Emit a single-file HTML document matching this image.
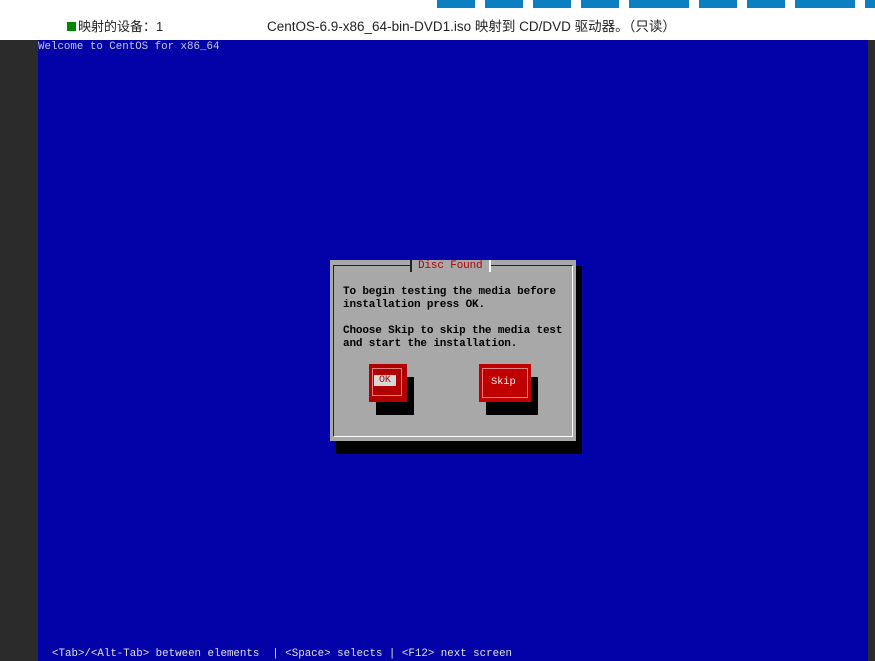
<!DOCTYPE html><html><head><style>
body{margin:0;width:875px;height:661px;overflow:hidden;background:#fff;position:relative;font-family:"Liberation Mono",monospace}
.a{position:absolute}
.t{background:#0a7fc2;top:0;height:8px}
.m{font-family:"Liberation Mono",monospace;font-size:11px;font-weight:bold;color:#000;white-space:pre;letter-spacing:-0.15px}
</style></head><body>
<div class="a t" style="left:437px;width:38px"></div><div class="a t" style="left:485px;width:38px"></div>
<div class="a t" style="left:533px;width:38px"></div><div class="a t" style="left:581px;width:38px"></div>
<div class="a t" style="left:629px;width:60px"></div><div class="a t" style="left:699px;width:38px"></div>
<div class="a t" style="left:747px;width:38px"></div><div class="a t" style="left:795px;width:60px"></div>
<div class="a t" style="left:865px;width:10px"></div>
<div class="a" style="left:67px;top:16px;font:13px 'Liberation Sans','Noto Sans CJK SC',sans-serif;color:#222"><span style="display:inline-block;width:9px;height:9px;background:#080;margin-right:2px"></span>映射的设备：1</div>
<div class="a" style="left:267px;top:15px;font:13.5px 'Liberation Sans','Noto Sans CJK SC',sans-serif;color:#222">CentOS-6.9-x86_64-bin-DVD1.iso 映射到 CD/DVD 驱动器。（只读）</div>
<div class="a" style="left:0;top:40px;width:875px;height:621px;background:#2b2b2b"></div>
<div class="a" style="left:38px;top:40px;width:830px;height:621px;background:#0202a8"></div>
<div class="a m" style="left:38px;top:41px;color:#c8c8d8;font-weight:normal;font-size:10.8px;letter-spacing:0">Welcome to CentOS for x86_64</div>
<div class="a m" style="left:52px;top:648px;color:#e0e0e0;font-weight:normal;font-size:10.8px;letter-spacing:0">&lt;Tab&gt;/&lt;Alt-Tab&gt; between elements  | &lt;Space&gt; selects | &lt;F12&gt; next screen</div>
<div class="a" style="left:336px;top:266px;width:246px;height:188px;background:#000"></div>
<div class="a" style="left:330px;top:260px;width:246px;height:181px;background:#a8a8a8"></div>
<div class="a" style="left:333px;top:265px;width:238px;height:170px;border:1px solid #222;border-right-color:#fff;border-bottom-color:#fff"></div>
<div class="a m" style="left:410px;top:260px;background:#a8a8a8;color:#b00000;padding:0 6px;border-left:2px solid #222;border-right:2px solid #fff;font-weight:normal">Disc Found</div>
<div class="a m" style="left:343px;top:286px;line-height:13px">To begin testing the media before
installation press OK.

Choose Skip to skip the media test
and start the installation.</div>
<div class="a" style="left:376px;top:377px;width:38px;height:38px;background:#000"></div>
<div class="a" style="left:369px;top:364px;width:38px;height:38px;background:#b00000"></div>
<div class="a" style="left:372px;top:368px;width:30px;height:28px;border:1px solid #e08080;box-sizing:border-box"></div>
<div class="a m" style="left:374px;top:375px;background:#d8d8d8;color:#b00000;padding:0 5px;font-size:10px;font-weight:normal">OK</div>
<div class="a" style="left:486px;top:377px;width:52px;height:38px;background:#000"></div>
<div class="a" style="left:479px;top:364px;width:52px;height:38px;background:#c00000"></div>
<div class="a" style="left:482px;top:368px;width:46px;height:30px;border:1px solid #e08080;box-sizing:border-box"></div>
<div class="a m" style="left:491px;top:376px;color:#eee;font-size:10.5px;font-weight:normal">Skip</div>
</body></html>
